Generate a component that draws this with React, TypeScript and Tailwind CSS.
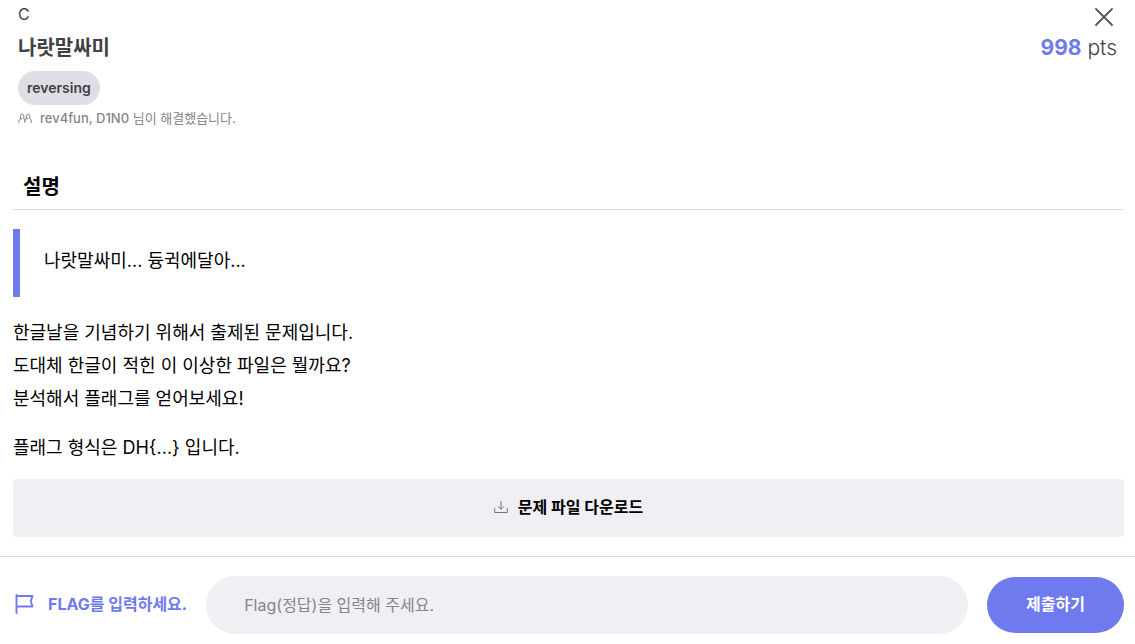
import { useState } from "react"

const solvers: string[] = ["rev4fun", "D1N0"]

const CloseIcon: React.FC = () => (
  <svg
    className="w-5 h-5"
    fill="none"
    viewBox="0 0 20 20"
    stroke="currentColor"
    strokeWidth={1.8}
    strokeLinecap="round"
  >
    <path d="M2 2l16 16M18 2L2 18" />
  </svg>
)

const SolversIcon: React.FC = () => (
  <svg
    className="w-3.5 h-3.5 text-[#77777b]"
    fill="none"
    viewBox="0 0 14 14"
    stroke="currentColor"
    strokeWidth={1}
    strokeLinecap="round"
  >
    <path d="M0.700 11.500c.1-1.700.6-2.900 1.700-3.700V5.200c0-1.300.7-2.100 1.700-2.100s1.700.8 1.700 2.100v2.200c.7.900 1.100 2.200 1.200 4.100M2.400 7.800c.6.300 1.200.300 1.700.1" />
    <path d="M7 9.500c.2-.8.600-1.400 1.300-1.900V5.200c0-1.300.7-2.100 1.700-2.100s1.700.8 1.700 2.100v2.200c1 .9 1.500 2.200 1.600 4.100M8.300 7.700c.6.300 1.200.300 1.700.1" />
  </svg>
)

const DownloadIcon: React.FC = () => (
  <svg
    className="w-3.5 h-3.5 text-[#77777b]"
    fill="none"
    viewBox="0 0 14 14"
    stroke="currentColor"
    strokeWidth={1}
    strokeLinecap="round"
    strokeLinejoin="round"
  >
    <path d="M7 1.500v7.500M4.300 6.500L7 9.200l2.700-2.700M0.700 8.500v4h12.600v-4" />
  </svg>
)

const FlagIcon: React.FC = () => (
  <svg
    className="w-5 h-5"
    fill="none"
    viewBox="0 0 20 20"
    stroke="currentColor"
    strokeWidth={1.9}
    strokeLinecap="round"
    strokeLinejoin="round"
  >
    <path d="M2.500 1v18M2.500 2h16l-1.700 5.200 1.700 5.300h-16" />
  </svg>
)

const App: React.FC = () => {
  const [flag, setFlag] = useState<string>("")

  return (
    <div className="flex flex-col min-h-screen bg-white text-black font-['Inter','Noto_Sans_CJK_KR',sans-serif]">
      <header className="flex justify-between px-[18px] pt-1 text-[#414144]">
        <div className="flex flex-col items-start">
          <span className="text-base leading-5">C</span>
          <h1 className="mt-[9px] text-xl font-bold leading-[30px]">
            나랏말싸미
          </h1>
          <span className="px-[9px] mt-2 text-sm font-semibold rounded-full leading-[34px] bg-[#dedee4]">
            reversing
          </span>
          <p className="flex items-center gap-2 mt-[3px] text-[13px] leading-5 text-[#85858a]">
            <SolversIcon />
            <span>
              <span className="font-medium">{solvers.join(", ")}</span> 님이
              해결했습니다.
            </span>
          </p>
        </div>

        <div className="flex flex-col items-end">
          <button
            type="button"
            aria-label="닫기"
            className="px-[3px] pt-[3px] pb-1.5 text-[#58585b] focus:outline-none focus-visible:ring"
          >
            <CloseIcon />
          </button>
          <p className="text-[21px] font-light leading-[30px]">
            <strong className="font-bold text-[#6e7aee]">998</strong> pts
          </p>
        </div>
      </header>

      <main className="flex-grow pl-[13px] pr-[11px] pb-[19px] mt-[43px]">
        <h2 className="px-2.5 pb-1.5 text-xl font-bold leading-8 border-b border-[#dedee0]">
          설명
        </h2>
        <blockquote className="pt-[15px] pb-[19px] pl-6 mt-[19px] text-lg border-l-[7px] border-[#6e7aee] leading-[34px]">
          나랏말싸미... 듕귁에달아...
        </blockquote>
        <p className="mt-[19px] text-lg leading-[33px]">
          한글날을 기념하기 위해서 출제된 문제입니다.
          <br />
          도대체 한글이 적힌 이 이상한 파일은 뭘까요?
          <br />
          분석해서 플래그를 얻어보세요!
        </p>
        <p className="mt-4 text-lg leading-[33px]">
          플래그 형식은 DH{"{...}"} 입니다.
        </p>
        <button
          type="button"
          className="flex items-center justify-center w-full gap-2.5 pb-0.5 mt-[15px] font-bold rounded h-[58px] bg-[#f0eff4] focus:outline-none focus-visible:ring"
        >
          <DownloadIcon />
          문제 파일 다운로드
        </button>
      </main>

      <form
        className="flex items-center pl-[13px] pr-[11px] pt-[19px] pb-2.5 border-t border-[#dedee4]"
        onSubmit={(e) => e.preventDefault()}
      >
        <label
          htmlFor="flag"
          className="flex items-center gap-3.5 pb-0.5 pl-px font-bold text-[#6e7aee] whitespace-nowrap"
        >
          <FlagIcon />
          FLAG를 입력하세요.
        </label>
        <input
          id="flag"
          type="text"
          value={flag}
          onChange={(e) => setFlag(e.target.value)}
          placeholder="Flag(정답)을 입력해 주세요."
          className="flex-grow min-w-0 ml-[19px] rounded-full h-[58px] px-[38px] bg-[#f0eff4] placeholder:text-[#85858a] focus:outline-none"
        />
        <button
          type="submit"
          className="h-14 pb-0.5 px-[39px] ml-[19px] font-semibold text-white rounded-full bg-[#6e7aee] focus:outline-none focus-visible:ring"
        >
          제출하기
        </button>
      </form>
    </div>
  )
}

export default App
